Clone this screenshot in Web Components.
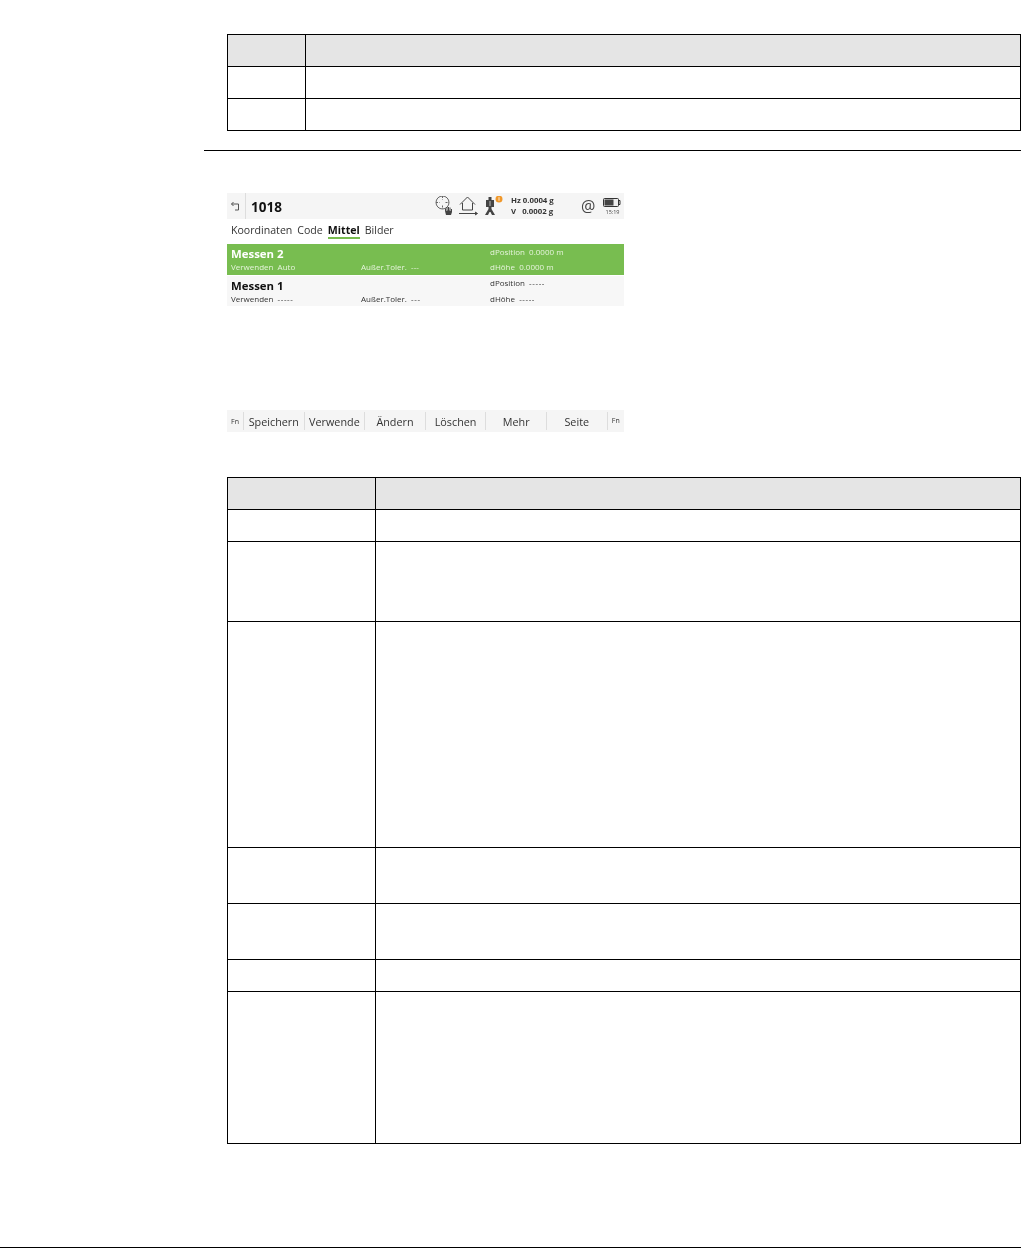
<!DOCTYPE html>
<html lang="de">
<head>
<meta charset="utf-8">
<title>Mittel</title>
<style>
  html, body { margin: 0; padding: 0; background: #fff; }
  body { width: 1021px; height: 1248px; overflow: hidden; font-family: 'Open Sans', sans-serif; }
</style>
</head>
<body>
<manual-page>
  <doc-table style="--first: 78px; --top: 34px" rows="32,32,32"></doc-table>
  <page-rule></page-rule>
  <device-screen></device-screen>
  <soft-keys></soft-keys>
  <doc-table style="--first: 148px; --top: 45px" rows="32,32,80,226,56,56,32,152"></doc-table>
</manual-page>
<script>
class ManualPage extends HTMLElement {
  connectedCallback() {
    this.attachShadow({ mode: 'open' })
    this.shadowRoot.innerHTML = `
      <style>
        :host { display: flex; flex-direction: column; width: 1021px; height: 1248px; box-sizing: border-box; border-bottom: 1px solid #000; }
      </style>
      <slot></slot>
    `
  }
}

class DocTable extends HTMLElement {
  connectedCallback() {
    this.attachShadow({ mode: 'open' })
    const rows = this.getAttribute('rows').split(',')
    const cells = rows.map((h, i) => `
      <div class="cell${i === 0 ? ' head' : ''}" style="height:${h}px"></div>
      <div class="cell${i === 0 ? ' head' : ''}" style="height:${h}px"></div>
    `).join('')
    this.shadowRoot.innerHTML = `
      <style>
        :host { display: block; margin: var(--top) 0 0 227px; width: 794px; }
        .table {
          display: grid;
          grid-template-columns: var(--first) 1fr;
          border-top: 1px solid #000;
          border-left: 1px solid #000;
        }
        .cell {
          box-sizing: border-box;
          border-right: 1px solid #000;
          border-bottom: 1px solid #000;
        }
        .head { background: #e5e5e5; }
      </style>
      <div class="table">${cells}</div>
    `
  }
}

class PageRule extends HTMLElement {
  connectedCallback() {
    this.attachShadow({ mode: 'open' })
    this.shadowRoot.innerHTML = `
      <style>
        :host { display: block; height: 1px; margin: 19px 0 0 204px; background: #000; }
      </style>
    `
  }
}

class DeviceScreen extends HTMLElement {
  connectedCallback() {
    this.attachShadow({ mode: 'open' })
    this.shadowRoot.innerHTML = `
      <style>
        :host {
          display: block; width: 397px; margin: 42px 0 0 227px;
          font-family: 'Open Sans', sans-serif; color: #222;
          filter: blur(0.35px);
        }
        .top { height: 26px; background: #f5f5f5; display: flex; align-items: center; }
        .back { width: 19px; height: 26px; border-right: 1px solid #ddd; display: flex; align-items: center; justify-content: center; box-sizing: border-box; }
        .id { margin-left: 5px; padding-top: 2px; font: bold 13.5px 'Open Sans', sans-serif; color: #111; }
        .icons { margin-left: auto; width: 189px; display: flex; align-items: center; height: 26px; }
        .read { font: bold 7.8px/11px 'Open Sans', sans-serif; color: #333; white-space: pre; margin-left: 8px; width: 70px; }
        .at { width: 14px; text-align: center; font-size: 16px; line-height: 20px; color: #444; }
        .batt { margin-left: 8px; width: 18px; padding-top: 1px; }
        .time { font-size: 5.5px; line-height: 8px; color: #444; text-align: center; white-space: nowrap; padding-left: 1px; }
        .tabs { height: 25px; display: flex; align-items: center; gap: 5px; padding-left: 4px; font-size: 10.6px; color: #333; box-sizing: border-box; padding-bottom: 3px; }
        .tabs b { color: #111; border-bottom: 2px solid #78bc4f; line-height: 13px; padding-top: 2px; }
        .row { display: grid; grid-template-columns: 130px 129px 1fr; grid-template-rows: 18px 10px; padding-left: 4px; }
        .row.on { height: 31px; background: #78bd50; color: #e6f4dc; }
        .row.off { height: 30px; margin-top: 1px; background: #f7f7f7; color: #333; }
        .name { grid-column: 1 / 3; font-size: 11.4px; font-weight: 700; line-height: 14px; padding-top: 3px; }
        .on .name { color: #fff; }
        .off .name { color: #111; }
        .small { font-size: 8px; line-height: 10px; white-space: pre; }
        .d { letter-spacing: 0.6px; }
        .c3 { grid-column: 3; grid-row: 1; padding-top: 3px; }
        .off .c3 { padding-top: 2px; }
        .c3b { grid-column: 3; grid-row: 2; }
      </style>
      <div class="top">
        <div class="back">
          <svg width="12" height="12" viewBox="0 0 12 12" fill="none" stroke="#555" stroke-width="1"><path d="M1.5 4H8.5V10H5"/><path d="M3.5 2L1.5 4L3.5 6"/></svg>
        </div>
        <div class="id">1018</div>
        <div class="icons">
          <svg width="19" height="20" viewBox="0 0 19 20" fill="none" stroke="#666" stroke-width="1"><circle cx="7.500" cy="6.500" r="6.500"/><path d="M7.500 0V3.500M7.500 9.500V13M1 6.500H4.500M10.500 6.500H14" stroke-dasharray="2 1"/><path d="M11 19L10 15V12.500H11V15H11.500V11H12.500V14.500H13V11H14V14.500H14.500V11.500H15.500V15H16V13H17V16L16 19Z" fill="#444" stroke="none"/></svg>
          <svg width="19" height="20" viewBox="0 0 19 20" fill="none" stroke="#444" stroke-width="1" style="margin-left:5px"><path d="M1 8.500L8.500 1L16 8.500M3.500 7V14H13.500V7"/><path d="M0 17.500H18"/><path d="M16 16L18.500 17.500L16 19" fill="#444"/></svg>
          <svg width="18" height="20" viewBox="0 0 18 20" style="margin-left:7px"><path d="M3.500 1H6.500V4H9V11H6.500V13L10 19H7L5.500 16H4.500L3 19H0L3.500 13V11H1V4H3.500Z" fill="#444"/><rect x="4.500" y="5" width="1" height="5" fill="#bbb"/><circle cx="14" cy="3" r="3.500" fill="#f0982b"/><path d="M14 1.200V4.800" stroke="#fff" stroke-width="0.800"/></svg>
          <div class="read">Hz 0.0004 g
V   0.0002 g</div>
          <div class="at">@</div>
          <div class="batt">
            <svg width="18" height="10" viewBox="0 0 18 10" style="display:block"><rect x="0.500" y="0.500" width="15" height="8" rx="1" fill="#eee" stroke="#333"/><rect x="1.500" y="1.500" width="9" height="6" fill="#444"/><path d="M16 2.500H17V6.500H16" fill="none" stroke="#333"/></svg>
            <div class="time">15:19</div>
          </div>
        </div>
      </div>
      <div class="tabs"><span>Koordinaten</span><span>Code</span><b>Mittel</b><span>Bilder</span></div>
      <div class="row on">
        <div class="name">Messen 2</div>
        <div class="small c3">dPosition  0.0000 m</div>
        <div class="small">Verwenden  Auto</div>
        <div class="small">Außer.Toler.  ---</div>
        <div class="small c3b">dHöhe  0.0000 m</div>
      </div>
      <div class="row off">
        <div class="name">Messen 1</div>
        <div class="small c3">dPosition  <span class="d">-----</span></div>
        <div class="small">Verwenden  <span class="d">-----</span></div>
        <div class="small">Außer.Toler.  <span class="d">---</span></div>
        <div class="small c3b">dHöhe  <span class="d">-----</span></div>
      </div>
    `
  }
}

class SoftKeys extends HTMLElement {
  connectedCallback() {
    this.attachShadow({ mode: 'open' })
    const keys = ['Speichern', 'Verwende', 'Ändern', 'Löschen', 'Mehr', 'Seite']
    this.shadowRoot.innerHTML = `
      <style>
        :host {
          display: flex; width: 397px; height: 22px; margin: 104px 0 0 227px;
          background: #f5f5f5; align-items: center;
          font-family: 'Open Sans', sans-serif; font-size: 10.8px; color: #333;
          filter: blur(0.35px);
        }
        .fn { width: 16px; text-align: center; font-size: 7px; }
        .key { width: 60.6px; height: 18px; padding-top: 1px; text-align: center; border-left: 1px solid #ddd; box-sizing: border-box; line-height: 18px; white-space: nowrap; }
        .fn.end { border-left: 1px solid #ddd; line-height: 18px; flex: 1; }
      </style>
      <div class="fn">Fn</div>
      ${keys.map((k) => `<div class="key">${k}</div>`).join('')}
      <div class="fn end">Fn</div>
    `
  }
}

customElements.define('manual-page', ManualPage)
customElements.define('doc-table', DocTable)
customElements.define('page-rule', PageRule)
customElements.define('device-screen', DeviceScreen)
customElements.define('soft-keys', SoftKeys)
</script>
</body>
</html>
